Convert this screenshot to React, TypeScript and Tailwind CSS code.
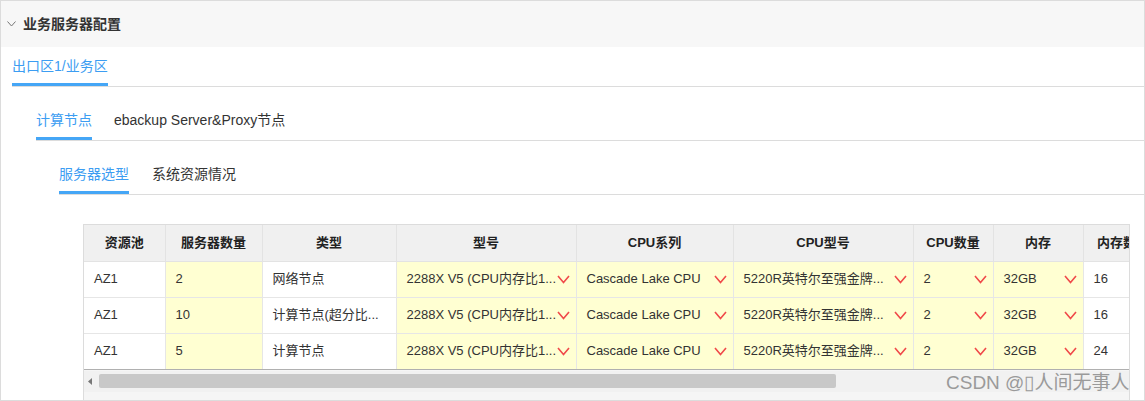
import React from "react";

const font = { fontFamily: '"Liberation Sans", "Noto Sans CJK SC", sans-serif' };

type Cell = { text: string; select?: boolean; yellow?: boolean };

const columns = [
  { title: "资源池", w: 81 },
  { title: "服务器数量", w: 97 },
  { title: "类型", w: 134 },
  { title: "型号", w: 180 },
  { title: "CPU系列", w: 157 },
  { title: "CPU型号", w: 180 },
  { title: "CPU数量", w: 80 },
  { title: "内存", w: 90 },
  { title: "内存数量", w: 80 },
];

const rows: Cell[][] = [
  [
    { text: "AZ1" },
    { text: "2", yellow: true },
    { text: "网络节点" },
    { text: "2288X V5 (CPU内存比1...", select: true },
    { text: "Cascade Lake CPU", select: true },
    { text: "5220R英特尔至强金牌...", select: true },
    { text: "2", select: true },
    { text: "32GB", select: true },
    { text: "16" },
  ],
  [
    { text: "AZ1" },
    { text: "10", yellow: true },
    { text: "计算节点(超分比..." },
    { text: "2288X V5 (CPU内存比1...", select: true },
    { text: "Cascade Lake CPU", select: true },
    { text: "5220R英特尔至强金牌...", select: true },
    { text: "2", select: true },
    { text: "32GB", select: true },
    { text: "16" },
  ],
  [
    { text: "AZ1" },
    { text: "5", yellow: true },
    { text: "计算节点" },
    { text: "2288X V5 (CPU内存比1...", select: true },
    { text: "Cascade Lake CPU", select: true },
    { text: "5220R英特尔至强金牌...", select: true },
    { text: "2", select: true },
    { text: "32GB", select: true },
    { text: "24" },
  ],
];

const RedChevron = () => (
  <svg width="13" height="9" viewBox="0 0 13 9" className="shrink-0">
    <polyline points="1,1 6.5,7.5 12,1" fill="none" stroke="#f04a4a" strokeWidth="1.6" />
  </svg>
);

const Tab = ({ label, active }: { label: string; active?: boolean }) => (
  <div
    className={
      "h-full flex items-end pb-[7px] leading-[20px] border-b-[3px] -mb-px " +
      (active ? "border-[#45a6f6] text-[#3c9df2]" : "border-transparent text-[#333]")
    }
  >
    {label}
  </div>
);

export default function App() {
  return (
    <div
      className="w-[1145px] h-[401px] bg-white border border-[#dcdcdc] overflow-hidden relative text-[#333]"
      style={font}
    >
      <div className="h-[46px] bg-[#f7f7f7] flex items-center pl-[6px] gap-[7px]">
        <svg width="9" height="6" viewBox="0 0 9 6">
          <polyline points="0.5,0.5 4.5,5 8.5,0.5" fill="none" stroke="#777" strokeWidth="1" />
        </svg>
        <span className="text-[14px] font-bold text-[#333]">业务服务器配置</span>
      </div>

      <div className="pl-[11px]">
        <div className="h-[40px] flex gap-8 border-b border-[#dcdcdc] text-[14px]">
          <Tab label="出口区1/业务区" active />
        </div>

        <div className="pl-[24px]">
          <div className="h-[54px] flex gap-[22px] border-b border-[#dcdcdc] text-[14px]">
            <Tab label="计算节点" active />
            <Tab label="ebackup Server&Proxy节点" />
          </div>

          <div className="pl-[23px]">
            <div className="h-[54px] flex gap-[23px] border-b border-[#dcdcdc] text-[14px]">
              <Tab label="服务器选型" active />
              <Tab label="系统资源情况" />
            </div>

            <div className="ml-[24px] mt-[29px] w-[1047px] h-[176px] border-l border-t border-r border-[#dcdcdc] overflow-hidden bg-[#f5f5f5]">
              <table className="w-[1079px] border-collapse table-fixed text-[13px] bg-white">
                <colgroup>
                  {columns.map((c, i) => (
                    <col key={i} style={{ width: c.w }} />
                  ))}
                </colgroup>
                <thead>
                  <tr className="h-[36px] bg-[#f0f0f0]">
                    {columns.map((c, i) => (
                      <th
                        key={i}
                        className="border-r border-b border-[#e3e3e3] font-bold text-center text-[#222] whitespace-nowrap overflow-hidden"
                      >
                        {c.title}
                      </th>
                    ))}
                  </tr>
                </thead>
                <tbody>
                  {rows.map((r, ri) => (
                    <tr key={ri} className="h-[36px]">
                      {r.map((cell, ci) => (
                        <td
                          key={ci}
                          className={
                            "border-r border-b border-[#e6e6e6] whitespace-nowrap overflow-hidden pl-[10px] " +
                            (cell.select ? "pr-[6px] " : "pr-[10px] ") +
                            (cell.select || cell.yellow ? "bg-[#ffffd2]" : "bg-white") +
                            (ri === rows.length - 1 ? " border-b-[#b0b0b0]" : "")
                          }
                        >
                          {cell.select ? (
                            <div className="flex items-center justify-between">
                              <span className="whitespace-nowrap">{cell.text}</span>
                              <RedChevron />
                            </div>
                          ) : (
                            cell.text
                          )}
                        </td>
                      ))}
                    </tr>
                  ))}
                </tbody>
              </table>
              <div className="h-[21px] bg-[#f1f1f1] flex items-center pl-[4px] gap-[7px] mt-[1px]">
                <svg width="4" height="7" viewBox="0 0 4 7">
                  <polygon points="4,0 0,3.5 4,7" fill="#777" />
                </svg>
                <div className="h-[14px] w-[737px] bg-[#c8c8c8] rounded-[2px]" />
              </div>
            </div>
          </div>
        </div>
      </div>

      <div className="absolute left-[945px] top-[368px] text-[19px] text-[#9a9a9a] whitespace-nowrap">
        CSDN @▯人间无事人
      </div>
    </div>
  );
}
